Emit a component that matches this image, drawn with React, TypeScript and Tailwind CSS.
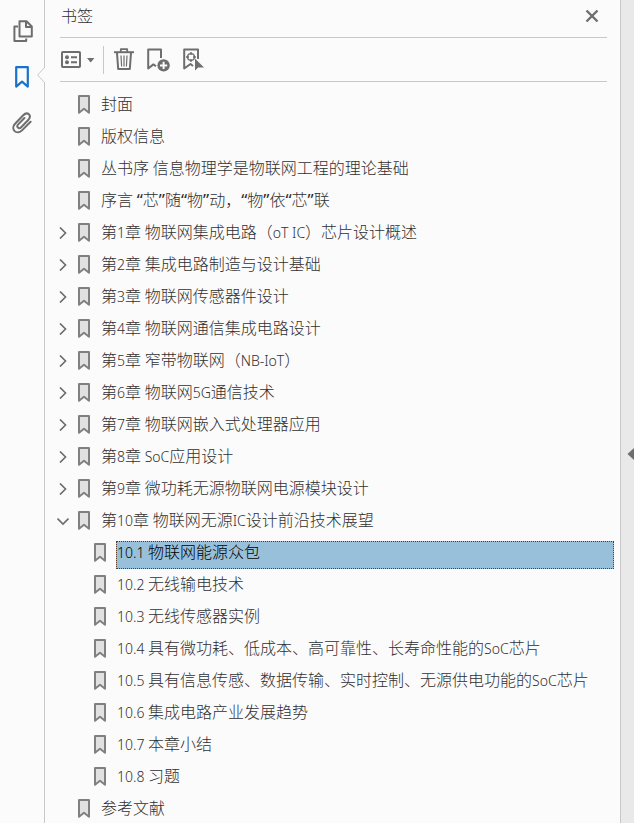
import { useState } from "react";

interface Bookmark {
  title: string;
  expandable?: boolean;
  children?: Bookmark[];
}

const bookmarks: Bookmark[] = [
  { title: "封面" },
  { title: "版权信息" },
  { title: "丛书序 信息物理学是物联网工程的理论基础" },
  { title: "序言 “芯”随“物”动，“物”依“芯”联" },
  { title: "第1章 物联网集成电路（oT IC）芯片设计概述", expandable: true },
  { title: "第2章 集成电路制造与设计基础", expandable: true },
  { title: "第3章 物联网传感器件设计", expandable: true },
  { title: "第4章 物联网通信集成电路设计", expandable: true },
  { title: "第5章 窄带物联网（NB-IoT）", expandable: true },
  { title: "第6章 物联网5G通信技术", expandable: true },
  { title: "第7章 物联网嵌入式处理器应用", expandable: true },
  { title: "第8章 SoC应用设计", expandable: true },
  { title: "第9章 微功耗无源物联网电源模块设计", expandable: true },
  {
    title: "第10章 物联网无源IC设计前沿技术展望",
    expandable: true,
    children: [
      { title: "10.1 物联网能源众包" },
      { title: "10.2 无线输电技术" },
      { title: "10.3 无线传感器实例" },
      { title: "10.4 具有微功耗、低成本、高可靠性、长寿命性能的SoC芯片" },
      { title: "10.5 具有信息传感、数据传输、实时控制、无源供电功能的SoC芯片" },
      { title: "10.6 集成电路产业发展趋势" },
      { title: "10.7 本章小结" },
      { title: "10.8 习题" },
    ],
  },
  { title: "参考文献" },
];

function PagesIcon() {
  return (
    <svg width="22" height="23" viewBox="-2 0 22 23" fill="none" stroke="#6e6e6e" strokeWidth="2" strokeLinejoin="round">
      <path d="M5 6.5H1.4V21H13.2V18.5" />
      <path d="M6.5 1.2H13.5L18.8 6.5V16.5H6.5Z" />
      <path d="M13 1.5V7H18.5" />
    </svg>
  );
}

function PanelBookmarkIcon() {
  return (
    <svg width="14" height="22" viewBox="0 0 14 22" fill="none" stroke="#1a73c9" strokeWidth="2.2" strokeLinejoin="round">
      <path d="M1.2 1.2H12.8V20.6L7 15.6L1.2 20.6Z" />
    </svg>
  );
}

function PaperclipIcon() {
  return (
    <svg width="20" height="22" viewBox="0 0 20 22" fill="none" stroke="#6e6e6e" strokeWidth="2" strokeLinecap="round" strokeLinejoin="round">
      <path d="M18.6 9.8L10 18.4C7.8 20.6 4.6 21 2.6 19.1C.6 17.1 1 14 3.1 11.8L11.2 3.3C13 1.4 15.3.8 16.9 2.3C18.5 3.9 17.9 6.2 16.2 8L9.2 15.2C8.1 16.3 6.8 16.4 5.9 15.6C5 14.7 5.2 13.4 6.2 12.4L12.4 6" />
    </svg>
  );
}

function OptionsIcon() {
  return (
    <svg width="34" height="18" viewBox="0 0 34 18" fill="none">
      <rect x="1" y="1" width="18" height="15" rx="0.8" stroke="#6e6e6e" strokeWidth="2" />
      <circle cx="6" cy="6.2" r="2" fill="#6e6e6e" />
      <circle cx="6" cy="11.2" r="2" fill="#6e6e6e" />
      <path d="M10 6.2H16M10 11.2H16" stroke="#6e6e6e" strokeWidth="2" />
      <path d="M26 7H33.4L29.7 11.4Z" fill="#6e6e6e" />
    </svg>
  );
}

function TrashIcon() {
  return (
    <svg width="20" height="23" viewBox="0 0 20 23" fill="none" stroke="#6e6e6e">
      <path d="M0 4.2H20" strokeWidth="2" />
      <path d="M6.8 4V1.2H13.2V4" strokeWidth="1.8" strokeLinejoin="round" />
      <path d="M3 5L4.2 21H15.8L17 5" strokeWidth="2" strokeLinejoin="round" />
      <path d="M7 7.5L7.6 18.5M10 7.5V18.5M13 7.5L12.4 18.5" strokeWidth="1.2" />
    </svg>
  );
}

function AddBookmarkIcon() {
  return (
    <svg width="23" height="24" viewBox="0 0 23 24" fill="none">
      <path d="M14 10V1.5H1.2V20.5L6.4 16.4L9 18.2" stroke="#6e6e6e" strokeWidth="2" strokeLinejoin="round" />
      <circle cx="16.6" cy="17.4" r="6.2" fill="#6e6e6e" />
      <path d="M16.6 13.8V21M13 17.4H20.2" stroke="#fbfbfb" strokeWidth="2" />
    </svg>
  );
}

function LocateBookmarkIcon() {
  return (
    <svg width="22" height="24" viewBox="0 0 22 24" fill="none">
      <path d="M15 11V1.5H1.2V20.5L7.5 16L10 18" stroke="#6e6e6e" strokeWidth="2" strokeLinejoin="round" />
      <circle cx="8" cy="9" r="3.4" stroke="#6e6e6e" strokeWidth="1.4" />
      <path d="M8 4V7M8 11V14M3 9H6M10 9H13" stroke="#6e6e6e" strokeWidth="1.4" />
      <path d="M12 10.5V22.5L15.2 19.4H21Z" fill="#6e6e6e" />
    </svg>
  );
}

function BookmarkIcon() {
  return (
    <svg width="12" height="19" viewBox="0 0 12 19" fill="#e1e1e1" stroke="#808080" strokeWidth="2" strokeLinejoin="round">
      <path d="M1 1H11V17.8L6 13.8L1 17.8Z" />
    </svg>
  );
}

function Chevron({ open }: { open: boolean }) {
  return (
    <svg width="12" height="12" viewBox="0 0 12 12" fill="none" stroke="#6e6e6e" strokeWidth="1.7">
      <path d={open ? "M0.5 3.5L6 9L11.5 3.5" : "M3 0.5L8.5 6L3 11.5"} />
    </svg>
  );
}

// Latin runs are set a step smaller so they sit evenly beside the Chinese glyphs,
// quotes a step larger.
function Title({ text }: { text: string }) {
  return text
    .split(/([\x20-\x7e]+|[“”])/)
    .filter(Boolean)
    .map((part, i) => {
      if (/^[“”]/.test(part)) {
        return (
          <span key={i} className="text-[17px] font-normal">
            {part}
          </span>
        );
      }
      if (/^[\x20-\x7e]/.test(part)) {
        return (
          <span key={i} className="text-[14px]">
            {part}
          </span>
        );
      }
      return part;
    });
}

interface BookmarkListProps {
  items: Bookmark[];
  selected: string;
  onSelect: (title: string) => void;
}

function BookmarkList({ items, selected, onSelect }: BookmarkListProps) {
  const [closed, setClosed] = useState<string[]>([]);

  function toggle(title: string) {
    setClosed((c) => (c.includes(title) ? c.filter((t) => t !== title) : [...c, title]));
  }

  return (
    <ul>
      {items.map((item) => {
        const open = Boolean(item.children) && !closed.includes(item.title);
        return (
          <li key={item.title}>
            <div className="flex h-8 items-start">
              {item.expandable ? (
                <button
                  type="button"
                  aria-label={open ? "折叠" : "展开"}
                  onClick={() => toggle(item.title)}
                  className="flex h-6 w-5 shrink-0 items-center justify-center"
                >
                  <Chevron open={open} />
                </button>
              ) : (
                <span className="w-5 shrink-0" />
              )}
              <span className="w-[27px] shrink-0 pt-[2px] pl-[5px]">
                <BookmarkIcon />
              </span>
              <button
                type="button"
                onClick={() => onSelect(item.title)}
                className={`h-7 min-w-0 flex-1 truncate border border-dotted pb-[6px] text-left leading-5 ${
                  selected === item.title
                    ? "border-[#5a3a2a] bg-[#99c0da] text-black"
                    : "border-transparent text-[#303030]"
                }`}
              >
                <Title text={item.title} />
              </button>
            </div>
            {open && item.children && (
              <div className="pl-4">
                <BookmarkList items={item.children} selected={selected} onSelect={onSelect} />
              </div>
            )}
          </li>
        );
      })}
    </ul>
  );
}

export default function App() {
  const [selected, setSelected] = useState("10.1 物联网能源众包");

  return (
    <div className="flex h-screen overflow-hidden bg-[#fbfbfb] font-['Noto_Sans','Noto_Sans_CJK_SC',sans-serif] text-[16px] font-light text-[#303030]">
      <nav className="flex w-[45px] shrink-0 flex-col border-r border-[#c8c8c8] pt-2">
        <button type="button" aria-label="页面" className="flex h-[46px] items-center justify-center">
          <PagesIcon />
        </button>
        <button type="button" aria-label="书签" className="relative flex h-[46px] items-center justify-center">
          <PanelBookmarkIcon />
          <svg className="absolute top-[13px] -right-px" width="8" height="16" viewBox="0 0 8 16" fill="none">
            <path d="M8 0.5L0.7 8L8 15.5Z" fill="#fbfbfb" />
            <path d="M7.5 0.5L0.7 8L7.5 15.5" stroke="#c8c8c8" />
          </svg>
        </button>
        <button type="button" aria-label="附件" className="flex h-[46px] items-center justify-center">
          <PaperclipIcon />
        </button>
      </nav>

      <main className="flex min-w-0 flex-1 flex-col">
        <header className="mr-[13px] ml-[15px] flex h-[38px] shrink-0 items-center justify-between border-b border-[#c8c8c8] pr-2 pb-[5px] pl-px">
          <h1>书签</h1>
          <button type="button" aria-label="关闭">
            <svg width="14" height="14" viewBox="0 0 14 14" fill="none" stroke="#6e6e6e" strokeWidth="2.4">
              <path d="M1.5 1.5L12.5 12.5M12.5 1.5L1.5 12.5" />
            </svg>
          </button>
        </header>

        <div className="mr-[13px] ml-[15px] flex h-11 shrink-0 items-center border-b border-[#c8c8c8] pl-px">
          <button type="button" aria-label="选项">
            <OptionsIcon />
          </button>
          <span className="ml-2 h-7 w-px bg-[#c8c8c8]" />
          <div className="ml-[10px] flex items-center gap-[13px]">
            <button type="button" aria-label="删除书签">
              <TrashIcon />
            </button>
            <button type="button" aria-label="新建书签">
              <AddBookmarkIcon />
            </button>
            <button type="button" aria-label="查找当前书签">
              <LocateBookmarkIcon />
            </button>
          </div>
        </div>

        <div className="min-h-0 flex-1 overflow-hidden pt-[11px] pr-[6px] pl-2">
          <BookmarkList items={bookmarks} selected={selected} onSelect={setSelected} />
        </div>
      </main>

      <aside className="flex w-[14px] shrink-0 flex-col justify-center border-l border-[#c8c8c8] bg-[#e9e9e9] pt-[84px]">
        <button type="button" aria-label="展开侧栏" className="flex justify-end">
          <svg width="7" height="12" viewBox="0 0 7 12">
            <path d="M7 0V12L0.5 6Z" fill="#6e6e6e" />
          </svg>
        </button>
      </aside>
    </div>
  );
}
